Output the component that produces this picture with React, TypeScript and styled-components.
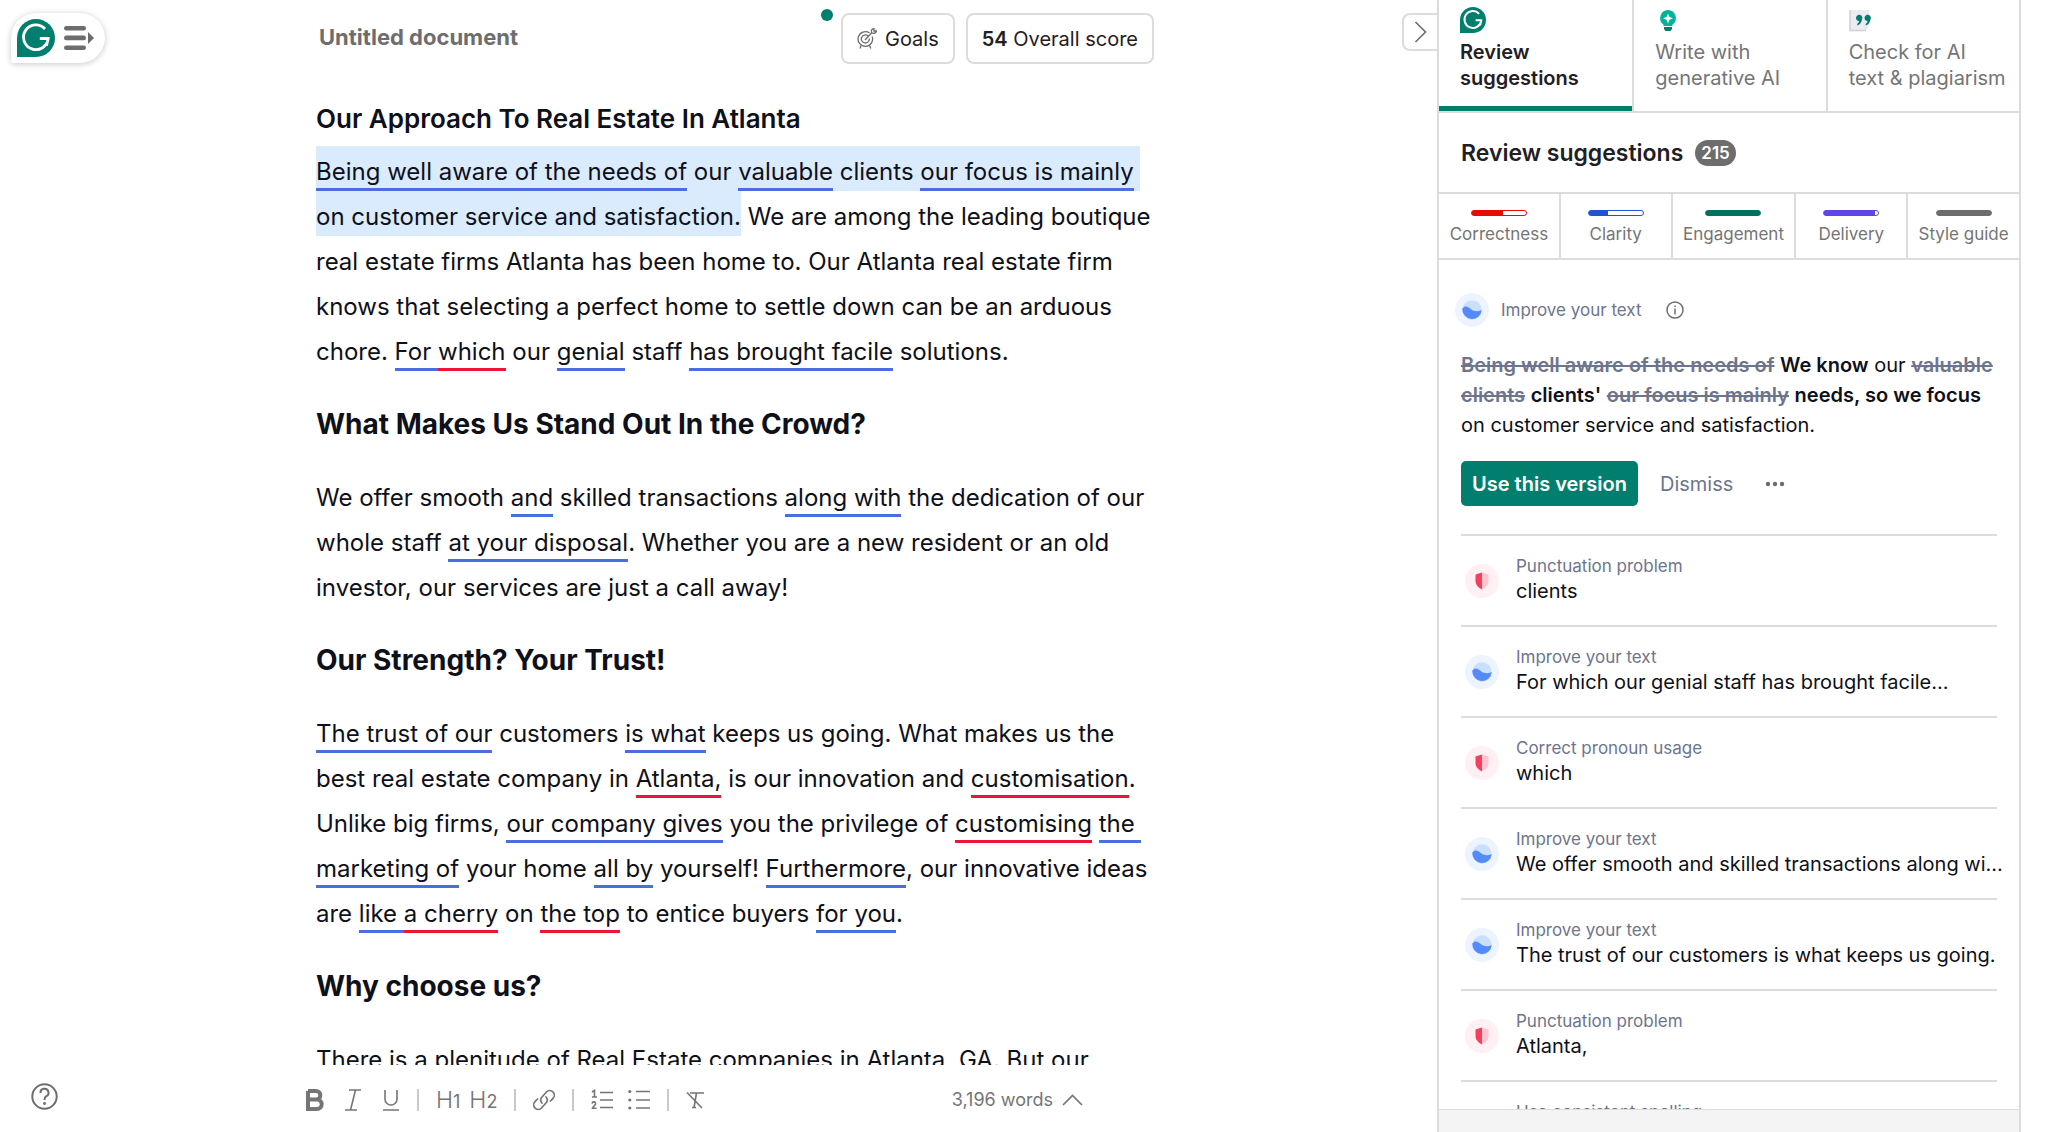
import React from "react";
import styled, { createGlobalStyle } from "styled-components";

const Global = createGlobalStyle`
  * { box-sizing: border-box; }
  body { margin: 0; background: #fff; color: #0e101a; font-family: Inter, "Liberation Sans", sans-serif; }
  button { font: inherit; color: inherit; background: none; border: 0; padding: 0; cursor: pointer; }
  h1, h2, h3, p, ul { margin: 0; padding: 0; }
  svg { display: block; flex: none; }
`;

const Page = styled.div`
  display: grid;
  grid-template-columns: 306px minmax(0, 1fr) 584px;
  height: 100vh;
  padding-right: 27px;
  overflow: hidden;
`;

const Rail = styled.aside`
  display: flex;
  flex-direction: column;
  justify-content: space-between;
  align-items: flex-start;
  padding: 13px 0 22px 11px;
`;

const MenuPill = styled.button`
  display: flex;
  align-items: center;
  gap: 9px;
  width: 94px;
  height: 50px;
  padding-left: 6px;
  background: #fff;
  border-radius: 25px 25px 25px 2px;
  box-shadow: 0 1px 6px rgba(0, 0, 0, 0.22);
`;

const HelpButton = styled.button`
  margin-left: 20px;
`;

const Main = styled.main`
  display: flex;
  flex-direction: column;
  min-width: 0;
  min-height: 0;
`;

const Header = styled.header`
  display: flex;
  align-items: flex-start;
  height: 70px;
  padding-top: 13px;
`;

const HeaderInner = styled.div`
  display: flex;
  flex: 1;
  max-width: 848px;
  gap: 11px;
  padding-left: 13px;
`;

const DocTitle = styled.h1`
  flex: 1;
  font-size: 22px;
  line-height: 48px;
  font-weight: 700;
  color: #6d6d6d;
`;

const PillButton = styled.button`
  display: flex;
  align-items: center;
  gap: 8px;
  height: 51px;
  padding: 0 14px;
  border: 2px solid #dcdcdc;
  border-radius: 8px;
  font-size: 20px;
  color: #1f2023;
  white-space: nowrap;
  b { font-weight: 600; }
`;

const GoalsWrap = styled.div`
  position: relative;
`;

const Dot = styled.span`
  position: absolute;
  left: -20px;
  top: -4px;
  width: 12px;
  height: 12px;
  border-radius: 50%;
  background: #027e6f;
`;

const CollapseButton = styled.button`
  display: flex;
  align-items: center;
  justify-content: center;
  width: 35px;
  height: 38px;
  margin-left: auto;
  border: 2px solid #dcdcdc;
  border-right: 0;
  border-radius: 8px 0 0 8px;
`;

const Scroll = styled.article`
  flex: 1;
  min-height: 0;
  overflow: hidden;
  padding: 31px 0 0 10px;
`;

const SectionTitle = styled.h3`
  font-size: 26px;
  line-height: 36px;
  font-weight: 600;
  white-space: nowrap;
  margin-bottom: 12px;
`;

const Heading = styled.h2`
  font-size: 28px;
  line-height: 37px;
  font-weight: 700;
  margin: 32px 0;
  white-space: nowrap;
`;

const Para = styled.p`
  font-size: 24px;
  line-height: 45px;
  white-space: nowrap;
`;

const Selected = styled.span`
  background: #dbebfe;
  padding: 11px 0 5px;
`;

const Mark = styled.span<{ $tone?: "red" }>`
  padding-bottom: 2px;
  border-bottom: 3px solid ${(p) => (p.$tone === "red" ? "#eb1536" : "#4a6ee0")};
`;

const Toolbar = styled.footer`
  display: flex;
  align-items: center;
  width: 100%;
  max-width: 777px;
  height: 67px;
  padding-top: 2px;
  color: #757575;
`;

const Tools = styled.div`
  display: flex;
  align-items: center;
  gap: 17px;
`;

const ToolGroup = styled.div<{ $gap: number }>`
  display: flex;
  align-items: center;
  gap: ${(p) => p.$gap}px;
`;

const Tool = styled.button`
  display: flex;
  align-items: center;
  height: 24px;
`;

const TextTool = styled(Tool)`
  font-size: 23px;
  font-weight: 300;
  align-items: baseline;
  line-height: 24px;
  span { font-size: 18px; font-weight: 400; }
`;

const Separator = styled.span`
  width: 2px;
  height: 22px;
  background: #c9c9c9;
`;

const Words = styled.button`
  display: flex;
  align-items: center;
  gap: 9px;
  margin-left: auto;
  font-size: 18px;
`;

const Panel = styled.aside`
  display: flex;
  flex-direction: column;
  min-height: 0;
  border: solid #dcdcdc;
  border-width: 0 2px;
`;

const Tabs = styled.nav`
  display: grid;
  grid-template-columns: repeat(3, 1fr);
  height: 113px;
  border-bottom: 2px solid #dcdcdc;
`;

const Tab = styled.button<{ $active?: boolean }>`
  display: flex;
  flex-direction: column;
  align-items: flex-start;
  gap: 6px;
  padding: 7px 0 0 21px;
  text-align: left;
  font-size: 20px;
  line-height: 26px;
  white-space: nowrap;
  font-weight: ${(p) => (p.$active ? 600 : 400)};
  color: ${(p) => (p.$active ? "#1f2023" : "#757575")};
  box-shadow: ${(p) => (p.$active ? "inset 0 -5px #027e6f" : "none")};
  & + & { border-left: 2px solid #dcdcdc; }
`;

const PanelTitle = styled.h2`
  display: flex;
  align-items: center;
  gap: 12px;
  height: 79px;
  padding-left: 22px;
  font-size: 23px;
  font-weight: 600;
  color: #1f2023;
`;

const Count = styled.span`
  padding: 0 6px;
  border-radius: 13px;
  background: #6d6d6d;
  color: #fff;
  font-size: 17px;
  line-height: 26px;
`;

const Categories = styled.div`
  display: grid;
  grid-template-columns: 120fr 112fr 124fr 112fr 113fr;
  height: 68px;
  border: solid #dcdcdc;
  border-width: 2px 0;
`;

const Category = styled.button`
  display: flex;
  flex-direction: column;
  align-items: center;
  gap: 7px;
  padding-top: 16px;
  font-size: 17px;
  line-height: 22px;
  color: #757575;
  white-space: nowrap;
  & + & { border-left: 2px solid #dcdcdc; }
`;

const Meter = styled.span<{ $color: string; $fill: number }>`
  width: 56px;
  height: 6px;
  border: 1px solid ${(p) => p.$color};
  border-radius: 3px;
  background: linear-gradient(to right, ${(p) => p.$color} ${(p) => p.$fill}%, #fff ${(p) => p.$fill}%);
`;

const Feed = styled.div`
  flex: 1;
  min-height: 0;
  overflow: hidden;
  padding: 33px 22px 0;
`;

const CardHead = styled.div`
  display: flex;
  align-items: center;
  gap: 12px;
  height: 34px;
  margin: 0 0 23px -6px;
`;

const Label = styled.span`
  font-size: 17px;
  line-height: 24px;
  color: #6d758d;
`;

const InfoButton = styled.button`
  margin-left: 12px;
`;

const Rewrite = styled.p`
  font-size: 20px;
  line-height: 30px;
  white-space: nowrap;
  b { font-weight: 600; }
  del { font-weight: 600; color: #6d758d; }
`;

const Actions = styled.div`
  display: flex;
  align-items: center;
  gap: 22px;
  padding: 21px 0 28px;
  font-size: 20px;
  color: #6d758d;
`;

const Primary = styled.button`
  height: 45px;
  padding: 0 11px;
  border-radius: 5px;
  background: #027e6f;
  color: #fff;
  font-weight: 600;
`;

const MoreButton = styled.button`
  margin-left: 10px;
`;

const List = styled.ul`
  list-style: none;
`;

const Item = styled.li`
  display: flex;
  align-items: center;
  gap: 17px;
  height: 91px;
  padding-left: 4px;
  border-top: 2px solid #dcdcdc;
`;

const ItemText = styled.div`
  display: flex;
  flex-direction: column;
  min-width: 0;
  padding-bottom: 3px;
  font-size: 20px;
  line-height: 26px;
  white-space: nowrap;
`;

const PanelFoot = styled.div`
  height: 23px;
  border-top: 1px solid #dcdcdc;
  background: #f4f4f4;
`;

const Logo = ({ w, h }: { w: number; h: number }) => (
  <svg width={w} height={h} viewBox="0 0 40 40" preserveAspectRatio="none">
    <path d="M0 40V20A20 20 0 1 1 20 40Z" fill="#027e6f" />
    <path d="M29.500 10.500A13 13 0 1 0 32.800 20.500H24M32.800 20.500L31 28" fill="none" stroke="#fff" strokeWidth="3" />
  </svg>
);

const WaveIcon = () => (
  <svg width="34" height="34" viewBox="0 0 34 34">
    <circle cx="17" cy="17" r="17" fill="#edf4ff" />
    <circle cx="17" cy="17" r="9.7" fill="#c9dffe" />
    <path d="M7.300 15.500C10 12 13 13.500 15.500 15.700C19 18.800 23 18.800 26.700 17A9.700 9.700 0 0 1 7.300 15.500Z" fill="#558afd" />
  </svg>
);

const ShieldIcon = () => (
  <svg width="34" height="34" viewBox="0 0 34 34">
    <circle cx="17" cy="17" r="17" fill="#fff0f3" />
    <path d="M17 8.500L23.500 10.500V17C23.500 21 20.500 23.500 17 25.500Z" fill="#ffc4cf" />
    <path d="M17 8.500L10.500 10.500V17C10.500 21 13.500 23.500 17 25.500Z" fill="#f43f5e" />
  </svg>
);

const GoalIcon = () => (
  <svg width="20" height="21" viewBox="0 0 20 21" fill="none" stroke="#6d6d6d" strokeWidth="1.3">
    <path d="M12.5 5A7.3 7.3 0 1 0 15.2 8.5M11 8A4 4 0 1 0 12.3 10.5M8 12L14.5 5M14.5 5V2L17 0V3H20L17.5 5.3ZM4 17.5L3 20.5M12.5 17.5L13.8 20.5" />
  </svg>
);

const items: { kind: "wave" | "shield"; label: string; text: string }[] = [
  { kind: "shield", label: "Punctuation problem", text: "clients" },
  { kind: "wave", label: "Improve your text", text: "For which our genial staff has brought facile..." },
  { kind: "shield", label: "Correct pronoun usage", text: "which" },
  { kind: "wave", label: "Improve your text", text: "We offer smooth and skilled transactions along wi..." },
  { kind: "wave", label: "Improve your text", text: "The trust of our customers is what keeps us going." },
  { kind: "shield", label: "Punctuation problem", text: "Atlanta," },
  { kind: "shield", label: "Use consistent spelling", text: "customisation" },
];

const categories = [
  { name: "Correctness", color: "#e90a00", fill: 58 },
  { name: "Clarity", color: "#2350d9", fill: 35 },
  { name: "Engagement", color: "#036f60", fill: 100 },
  { name: "Delivery", color: "#6045e8", fill: 94 },
  { name: "Style guide", color: "#6d6d6d", fill: 100 },
];

export default function App() {
  return (
    <Page>
      <Global />
      <Rail>
        <MenuPill aria-label="Open menu">
          <Logo w={38} h={38} />
          <svg width="30" height="26" viewBox="0 0 30 26" fill="#6d6d6d">
            <rect y="1" width="22" height="4.6" rx="2.3" />
            <rect y="10.6" width="22" height="4.6" rx="2.3" />
            <rect y="20.4" width="22" height="4.6" rx="2.3" />
            <path d="M24 7L30 13L24 19Z" />
          </svg>
        </MenuPill>
        <HelpButton aria-label="Help">
          <svg width="27" height="27" viewBox="0 0 27 27" fill="none" stroke="#6d6d6d" strokeWidth="2">
            <circle cx="13.5" cy="13.5" r="12.2" />
            <path d="M9.500 10A4 4 0 1 1 15.400 13.200C14 14 13.500 14.600 13.500 17" />
            <circle cx="13.500" cy="20.500" r="1.400" fill="#6d6d6d" stroke="none" />
          </svg>
        </HelpButton>
      </Rail>

      <Main>
        <Header>
          <HeaderInner>
            <DocTitle>Untitled document</DocTitle>
            <GoalsWrap>
              <Dot />
              <PillButton><GoalIcon />Goals</PillButton>
            </GoalsWrap>
            <PillButton><span><b>54</b> Overall score</span></PillButton>
          </HeaderInner>
          <CollapseButton aria-label="Collapse panel">
            <svg width="13" height="22" viewBox="0 0 13 22" fill="none" stroke="#6d6d6d" strokeWidth="1.600">
              <path d="M1.500 1L11.500 11L1.500 21" />
            </svg>
          </CollapseButton>
        </Header>

        <Scroll>
          <SectionTitle>Our Approach To Real Estate In Atlanta</SectionTitle>
          <Para>
            <Selected><Mark>Being well aware of the needs of</Mark> our <Mark>valuable</Mark> clients <Mark>our focus is mainly</Mark>{"\u00a0"}<br />on customer service and satisfaction.</Selected> We are among the leading boutique<br />
            real estate firms Atlanta has been home to. Our Atlanta real estate firm<br />
            knows that selecting a perfect home to settle down can be an arduous<br />
            chore. <Mark>For </Mark><Mark $tone="red">which</Mark> our <Mark>genial</Mark> staff <Mark>has brought facile</Mark> solutions.
          </Para>
          <Heading>What Makes Us Stand Out In the Crowd?</Heading>
          <Para>
            We offer smooth <Mark>and</Mark> skilled transactions <Mark>along with</Mark> the dedication of our<br />
            whole staff <Mark>at your disposal</Mark>. Whether you are a new resident or an old<br />
            investor, our services are just a call away!
          </Para>
          <Heading>Our Strength? Your Trust!</Heading>
          <Para>
            <Mark>The trust of our</Mark> customers <Mark>is what</Mark> keeps us going. What makes us the<br />
            best real estate company in <Mark $tone="red">Atlanta,</Mark> is our innovation and <Mark $tone="red">customisation</Mark>.<br />
            Unlike big firms, <Mark>our company gives</Mark> you the privilege of <Mark $tone="red">customising</Mark> <Mark>the{"\u00a0"}</Mark><br />
            <Mark>marketing of</Mark> your home <Mark>all by</Mark> yourself! <Mark>Furthermore</Mark>, our innovative ideas<br />
            are <Mark>like </Mark><Mark $tone="red">a cherry</Mark> on <Mark $tone="red">the top</Mark> to entice buyers <Mark>for you</Mark>.
          </Para>
          <Heading>Why choose us?</Heading>
          <Para>There is a plenitude of Real Estate companies in Atlanta, GA. But our</Para>
        </Scroll>

        <Toolbar>
          <Tools>
            <ToolGroup $gap={20}>
              <Tool aria-label="Bold">
                <svg width="18" height="22" viewBox="0 0 18 22" fill="none" stroke="currentColor" strokeWidth="4">
                  <path d="M2 2H10A4.200 4.200 0 0 1 10 10.600H2M10 10.600H11A4.700 4.700 0 0 1 11 20H2V2" />
                </svg>
              </Tool>
              <Tool aria-label="Italic">
                <svg width="18" height="22" viewBox="0 0 18 22" fill="none" stroke="currentColor" strokeWidth="1.6">
                  <path d="M5 1H17M1 21H13M11.500 1L6.500 21" />
                </svg>
              </Tool>
              <Tool aria-label="Underline">
                <svg width="18" height="22" viewBox="0 0 18 22" fill="none" stroke="currentColor" strokeWidth="1.6">
                  <path d="M3 1V10A6 6 0 0 0 15 10V1M1 21H17" />
                </svg>
              </Tool>
            </ToolGroup>
            <Separator />
            <ToolGroup $gap={9}>
              <TextTool aria-label="Heading 1">H<span>1</span></TextTool>
              <TextTool aria-label="Heading 2">H<span>2</span></TextTool>
            </ToolGroup>
            <Separator />
            <Tool aria-label="Link">
              <svg width="22" height="22" viewBox="0 0 22 22" fill="none" stroke="currentColor" strokeWidth="1.7" strokeLinecap="round">
                <path d="M9 14A4.500 4.500 0 0 1 9 8L13.500 3A4.500 4.500 0 0 1 20 9.300L17.500 12M13 8A4.500 4.500 0 0 1 13 14L8.500 19A4.500 4.500 0 0 1 2 12.700L4.500 10" />
              </svg>
            </Tool>
            <Separator />
            <ToolGroup $gap={15}>
              <Tool aria-label="Numbered list">
                <svg width="22" height="22" viewBox="0 0 22 22" fill="none" stroke="currentColor" strokeWidth="1.6">
                  <path d="M9 3.500H22M9 11H22M9 18.500H22" />
                  <path d="M1 3L3.500 1.500V8M1 8H6M1 14.500C1.500 12 5 12.500 4.500 15C4 16.500 2 17.500 1.500 19.200H5.500" />
                </svg>
              </Tool>
              <Tool aria-label="Bulleted list">
                <svg width="22" height="22" viewBox="0 0 22 22" fill="currentColor">
                  <path d="M8 1.700H22V3.300H8ZM8 10.200H22V11.800H8ZM8 18.200H22V19.800H8Z" />
                  <circle cx="1.800" cy="2.500" r="1.600" /><circle cx="1.800" cy="11" r="1.600" /><circle cx="1.800" cy="19" r="1.600" />
                </svg>
              </Tool>
            </ToolGroup>
            <Separator />
            <Tool aria-label="Clear formatting">
              <svg width="18" height="18" viewBox="0 0 18 18" fill="none" stroke="currentColor" strokeWidth="1.600">
                <path d="M4 2H18M10.500 2L8 16.500M6 16.500H10M1 1.500L16 17" />
              </svg>
            </Tool>
          </Tools>
          <Words>
            3,196 words
            <svg width="21" height="12" viewBox="0 0 21 12" fill="none" stroke="currentColor" strokeWidth="1.700">
              <path d="M1 11L10.500 1.500L20 11" />
            </svg>
          </Words>
        </Toolbar>
      </Main>

      <Panel>
        <Tabs>
          <Tab $active><Logo w={26} h={26} /><span>Review<br />suggestions</span></Tab>
          <Tab>
            <svg width="26" height="26" viewBox="0 0 26 26">
              <path d="M13 3A8 8 0 0 0 8.500 17.500V19H17.500V17.500A8 8 0 0 0 13 3Z" fill="#00b39b" />
              <path d="M9 20H17V22L15.500 24H10.500L9 22Z" fill="#027e6f" />
              <path d="M13 6.500L14.500 10L18 11.300L14.500 12.700L13 16.500L11.500 12.700L8 11.300L11.500 10Z" fill="#fff" />
            </svg>
            <span>Write with<br />generative AI</span>
          </Tab>
          <Tab>
            <svg width="26" height="26" viewBox="0 0 26 26">
              <path d="M1 3H20V19L17 24H1Z" fill="#ececf0" />
              <path d="M1 3V23.500H17" fill="none" stroke="#cfcfd4" strokeWidth="1.500" />
              <path d="M7 11A3.200 3.200 0 1 1 13 12.500C12.500 15.500 11 17.500 8.500 18.500L8 17C9.500 16 10 15 10 14A3.200 3.200 0 0 1 7 11ZM15.500 11A3.200 3.200 0 1 1 21.500 12.500C21 15.500 19.500 17.500 17 18.500L16.500 17C18 16 18.500 15 18.500 14A3.200 3.200 0 0 1 15.500 11Z" fill="#027e6f" />
            </svg>
            <span>Check for AI<br />text &amp; plagiarism</span>
          </Tab>
        </Tabs>
        <PanelTitle>Review suggestions <Count>215</Count></PanelTitle>
        <Categories>
          {categories.map((c) => (
            <Category key={c.name}><Meter $color={c.color} $fill={c.fill} />{c.name}</Category>
          ))}
        </Categories>
        <Feed>
          <CardHead>
            <WaveIcon />
            <Label>Improve your text</Label>
            <InfoButton aria-label="About this suggestion">
              <svg width="18" height="18" viewBox="0 0 18 18" fill="none" stroke="#6d6d6d" strokeWidth="1.500">
                <circle cx="9" cy="9" r="8" /><path d="M9 7.500V13.500M9 4.500V6" />
              </svg>
            </InfoButton>
          </CardHead>
          <Rewrite>
            <del>Being well aware of the needs of</del> <b>We know</b> our <del>valuable</del><br />
            <del>clients</del> <b>clients'</b> <del>our focus is mainly</del> <b>needs, so we focus</b><br />
            on customer service and satisfaction.
          </Rewrite>
          <Actions>
            <Primary>Use this version</Primary>
            <button>Dismiss</button>
            <MoreButton aria-label="More options">
              <svg width="20" height="6" viewBox="0 0 20 6" fill="#6d6d6d">
                <circle cx="3" cy="3" r="2.200" /><circle cx="10" cy="3" r="2.200" /><circle cx="17" cy="3" r="2.200" />
              </svg>
            </MoreButton>
          </Actions>
          <List>
            {items.map((it, i) => (
              <Item key={i}>
                {it.kind === "wave" ? <WaveIcon /> : <ShieldIcon />}
                <ItemText><Label>{it.label}</Label><span>{it.text}</span></ItemText>
              </Item>
            ))}
          </List>
        </Feed>
        <PanelFoot />
      </Panel>
    </Page>
  );
}
